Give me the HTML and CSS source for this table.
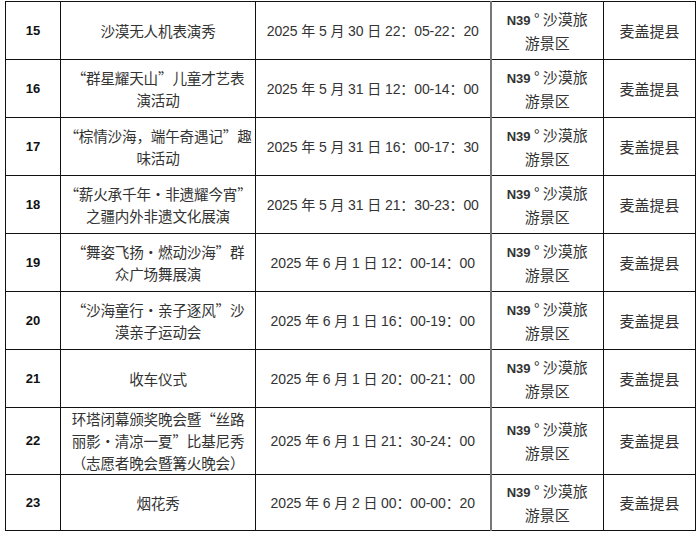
FILE: index.html
```html
<!DOCTYPE html>
<html lang="zh-CN">
<head>
<meta charset="utf-8">
<link rel="stylesheet" href="styles.css">
</head>
<body>
<table class="sched">
  <colgroup>
    <col class="c-no"><col class="c-name"><col class="c-time"><col class="c-place"><col class="c-county">
  </colgroup>
  <tbody>
    <tr class="r">
      <td class="no">15</td>
      <td class="name">沙漠无人机表演秀</td>
      <td class="time">2025 年 5 月 30 日 22：05-22：20</td>
      <td class="place"><span class="lat">N39</span> °&nbsp;沙漠旅<br>游景区</td>
      <td class="county">麦盖提县</td>
    </tr>
    <tr class="r">
      <td class="no">16</td>
      <td class="name">“群星耀天山”儿童才艺表<br>演活动</td>
      <td class="time">2025 年 5 月 31 日 12：00-14：00</td>
      <td class="place"><span class="lat">N39</span> °&nbsp;沙漠旅<br>游景区</td>
      <td class="county">麦盖提县</td>
    </tr>
    <tr class="r">
      <td class="no">17</td>
      <td class="name">“棕情沙海，端午奇遇记”趣<br>味活动</td>
      <td class="time">2025 年 5 月 31 日 16：00-17：30</td>
      <td class="place"><span class="lat">N39</span> °&nbsp;沙漠旅<br>游景区</td>
      <td class="county">麦盖提县</td>
    </tr>
    <tr class="r">
      <td class="no">18</td>
      <td class="name">“薪火承千年·非遗耀今宵”<br>之疆内外非遗文化展演</td>
      <td class="time">2025 年 5 月 31 日 21：30-23：00</td>
      <td class="place"><span class="lat">N39</span> °&nbsp;沙漠旅<br>游景区</td>
      <td class="county">麦盖提县</td>
    </tr>
    <tr class="r">
      <td class="no">19</td>
      <td class="name">“舞姿飞扬·燃动沙海”群<br>众广场舞展演</td>
      <td class="time">2025 年 6 月 1 日 12：00-14：00</td>
      <td class="place"><span class="lat">N39</span> °&nbsp;沙漠旅<br>游景区</td>
      <td class="county">麦盖提县</td>
    </tr>
    <tr class="r">
      <td class="no">20</td>
      <td class="name">“沙海童行·亲子逐风”沙<br>漠亲子运动会</td>
      <td class="time">2025 年 6 月 1 日 16：00-19：00</td>
      <td class="place"><span class="lat">N39</span> °&nbsp;沙漠旅<br>游景区</td>
      <td class="county">麦盖提县</td>
    </tr>
    <tr class="r">
      <td class="no">21</td>
      <td class="name">收车仪式</td>
      <td class="time">2025 年 6 月 1 日 20：00-21：00</td>
      <td class="place"><span class="lat">N39</span> °&nbsp;沙漠旅<br>游景区</td>
      <td class="county">麦盖提县</td>
    </tr>
    <tr class="r tall">
      <td class="no">22</td>
      <td class="name">环塔闭幕颁奖晚会暨“丝路<br>丽影·清凉一夏”比基尼秀<br>（志愿者晚会暨篝火晚会）</td>
      <td class="time">2025 年 6 月 1 日 21：30-24：00</td>
      <td class="place"><span class="lat">N39</span> °&nbsp;沙漠旅<br>游景区</td>
      <td class="county">麦盖提县</td>
    </tr>
    <tr class="r last">
      <td class="no">23</td>
      <td class="name">烟花秀</td>
      <td class="time">2025 年 6 月 2 日 00：00-00：20</td>
      <td class="place"><span class="lat">N39</span> °&nbsp;沙漠旅<br>游景区</td>
      <td class="county">麦盖提县</td>
    </tr>
  </tbody>
</table>
</body>
</html>
```
FILE: styles.css
```css
html, body {
  margin: 0;
  background: #fff;
}
body {
  padding: 1px 0 0 5px;
  font-family: "Noto Sans CJK SC", sans-serif;
  color: #333;
}
.sched {
  border-collapse: collapse;
  table-layout: fixed;
  width: 690px;
}
.c-no { width: 55px; }
.c-name { width: 195px; }
.c-time { width: 235px; }
.c-place { width: 113px; }
.c-county { width: 92px; }
.sched td {
  border: 1px solid #111;
  padding: 0;
  text-align: center;
  vertical-align: middle;
  font-size: 15px;
  line-height: 22px;
  white-space: nowrap;
  overflow: hidden;
}
.r td { height: 57px; }
.tall td { height: 66px; }
.last td { height: 55px; }
.sched td.no {
  font-family: "Liberation Sans", "Noto Sans CJK SC", sans-serif;
  font-weight: bold;
  font-size: 13px;
  color: #111;
}
.sched td.name {
  font-size: 14.6px;
  letter-spacing: -0.2px;
}
.sched td.time {
  font-family: "Liberation Sans", "Noto Sans CJK SC", sans-serif;
  font-size: 14px;
  letter-spacing: -0.1px;
  border-right: 2px solid #777;
}
.lat {
  font-family: "Liberation Sans", sans-serif;
  font-weight: bold;
  font-size: 13px;
}
.sched td.place {
  font-size: 15px;
}
```
